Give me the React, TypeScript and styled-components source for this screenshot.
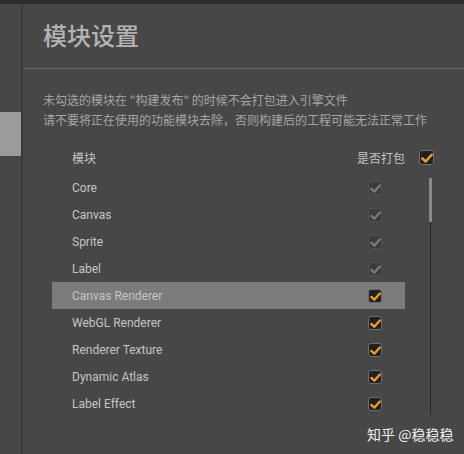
import React from "react";
import styled, { createGlobalStyle } from "styled-components";

const Global = createGlobalStyle`
  html, body { margin: 0; padding: 0; background: #474747; }
  body { font-family: "Noto Sans CJK SC", "Noto Sans", sans-serif; }
`;

const Page = styled.div`
  position: relative;
  width: 464px;
  height: 454px;
  display: flex;
  flex-direction: column;
  background: #474747;
  overflow: hidden;
`;

const TopBar = styled.div`
  height: 4px;
  background: #2c2c2c;
  flex: none;
`;

const Body = styled.div`
  flex: 1;
  display: flex;
`;

const Sidebar = styled.div`
  width: 21px;
  flex: none;
  background: #464646;
  display: flex;
  flex-direction: column;
`;

const SideBlock = styled.div`
  margin-top: 108px;
  height: 44px;
  background: #9b9b9b;
`;

const Divider = styled.div`
  width: 2px;
  flex: none;
  background: #393939;
`;

const Main = styled.div`
  flex: 1;
  display: flex;
  flex-direction: column;
`;

const TitleBar = styled.div`
  height: 65px;
  display: flex;
  align-items: center;
  padding-left: 20px;
  border-bottom: 1px solid #6c6c6c;
  box-sizing: border-box;
  padding-bottom: 2px;
`;

const Title = styled.h1`
  margin: 0;
  font-family: "Noto Sans CJK SC", sans-serif;
  font-size: 24px;
  font-weight: 500;
  color: #b4b4b4;
  line-height: 32px;
`;

const Desc = styled.div`
  margin-top: 21px;
  padding-left: 20px;
  font-size: 12px;
  line-height: 20px;
  color: #a6a6a6;
  white-space: nowrap;
`;

const Table = styled.div`
  margin-left: 29px;
  margin-top: 14px;
  display: flex;
  flex-direction: column;
`;

const Header = styled.div`
  width: 382px;
  height: 27px;
  display: flex;
  align-items: center;
  font-size: 12px;
  color: #c4c4c4;
`;

const HeaderName = styled.span`
  padding-left: 20px;
  flex: 1;
`;

const HeaderLabel = styled.span`
  margin-right: 14px;
`;

const ListWrap = styled.div`
  margin-top: 3px;
  display: flex;
`;

const List = styled.div`
  width: 353px;
  display: flex;
  flex-direction: column;
`;

const Row = styled.div<{ $active?: boolean }>`
  height: 27px;
  display: flex;
  align-items: center;
  justify-content: space-between;
  padding: 0 23px 0 20px;
  box-sizing: border-box;
  background: ${(p) => (p.$active ? "#7b7b7b" : "transparent")};
  border-top: 1px solid ${(p) => (p.$active ? "#7b7b7b" : "transparent")};
`;

const RowName = styled.span`
  font-family: Roboto, "Noto Sans", sans-serif;
  font-size: 12px;
  color: #c6c6c6;
`;

const Track = styled.div`
  margin-left: 24px;
  margin-top: 4px;
  width: 3px;
  height: 237px;
  position: relative;
  display: flex;
  justify-content: center;
`;

const TrackLine = styled.div`
  width: 1px;
  height: 100%;
  background: #262626;
`;

const Thumb = styled.div`
  position: absolute;
  top: 0;
  left: 0;
  width: 3px;
  height: 44px;
  background: #8a8a8a;
`;

const Box = styled.div<{ $size: number; $disabled?: boolean }>`
  width: ${(p) => p.$size}px;
  height: ${(p) => p.$size}px;
  box-sizing: border-box;
  border-radius: 3px;
  border: 1px solid ${(p) => (p.$disabled ? "#525252" : "#6e6e72")};
  background: ${(p) => (p.$disabled ? "#3c3c3c" : "#1f2024")};
  display: flex;
  align-items: center;
  justify-content: center;
  flex: none;
`;

const Watermark = styled.div`
  position: absolute;
  left: 367px;
  top: 424px;
  font-size: 14px;
  line-height: 20px;
  color: #f0f0f0;
  white-space: nowrap;
`;

function Check({ size = 14, disabled }: { size?: number; disabled?: boolean }) {
  const color = disabled ? "#7a7a7a" : "#f59b23";
  return (
    <Box $size={size} $disabled={disabled}>
      <svg width={size - 3} height={size - 3} viewBox="0 0 10 10">
        <path d="M1.2 5.4 L3.9 7.9 L8.9 2.3" fill="none" stroke={color} strokeWidth="2.1" strokeLinecap="round" strokeLinejoin="round" />
      </svg>
    </Box>
  );
}

const modules: { name: string; disabled?: boolean }[] = [
  { name: "Core", disabled: true },
  { name: "Canvas", disabled: true },
  { name: "Sprite", disabled: true },
  { name: "Label", disabled: true },
  { name: "Canvas Renderer" },
  { name: "WebGL Renderer" },
  { name: "Renderer Texture" },
  { name: "Dynamic Atlas" },
  { name: "Label Effect" },
];

export default function App() {
  return (
    <>
      <Global />
      <Page>
        <TopBar />
        <Body>
          <Sidebar>
            <SideBlock />
          </Sidebar>
          <Divider />
          <Main>
            <TitleBar>
              <Title>模块设置</Title>
            </TitleBar>
            <Desc>
              <div>未勾选的模块在 "构建发布" 的时候不会打包进入引擎文件</div>
              <div>请不要将正在使用的功能模块去除，否则构建后的工程可能无法正常工作</div>
            </Desc>
            <Table>
              <Header>
                <HeaderName>模块</HeaderName>
                <HeaderLabel>是否打包</HeaderLabel>
                <Check size={15} />
              </Header>
              <ListWrap>
                <List>
                  {modules.map((m, i) => (
                    <Row key={m.name} $active={i === 4}>
                      <RowName>{m.name}</RowName>
                      <Check disabled={m.disabled} />
                    </Row>
                  ))}
                </List>
                <Track>
                  <TrackLine />
                  <Thumb />
                </Track>
              </ListWrap>
            </Table>
          </Main>
        </Body>
        <Watermark>知乎 @稳稳稳</Watermark>
      </Page>
    </>
  );
}
